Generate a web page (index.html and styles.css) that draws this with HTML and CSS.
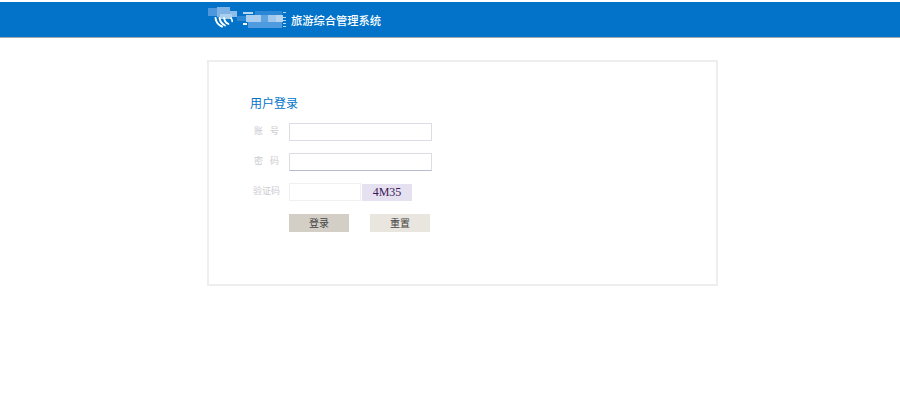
FILE: index.html
```html
<!DOCTYPE html>
<html lang="zh">
<head>
<meta charset="utf-8">
<title>旅游综合管理系统</title>
<link rel="stylesheet" href="styles.css">
</head>
<body>
<header class="topbar">
  <div class="brand">
    <svg class="logo" width="82" height="35" viewBox="208 2 82 35" aria-hidden="true">
      <g shape-rendering="crispEdges">
        <rect x="208" y="8" width="9" height="8" fill="#4d97dc"/>
        <rect x="217" y="7" width="13" height="10" fill="#7eb2e5"/>
        <rect x="230" y="11" width="7" height="6" fill="#90bde8"/>
        <rect x="220" y="14" width="12" height="5" fill="#a8cfee"/>
        <rect x="237" y="16" width="10" height="5" fill="#2f88d4"/>
        <rect x="255" y="11" width="27" height="4" fill="#2a87d6"/>
        <rect x="246" y="15" width="15" height="7" fill="#a9cdee"/>
        <rect x="261" y="15" width="7" height="7" fill="#5da3e0"/>
        <rect x="268" y="15" width="8" height="7" fill="#a0c8ec"/>
        <rect x="276" y="15" width="7" height="7" fill="#b4d4f0"/>
        <rect x="248" y="22" width="34" height="6" fill="#4f9bdf"/>
        <rect x="243" y="12" width="10" height="2" fill="#b9d6f1"/>
        <rect x="243" y="23" width="4" height="2" fill="#f2f7fc"/>
        <rect x="283" y="12" width="3" height="1" fill="#b9d6f1"/>
        <rect x="283" y="17" width="3" height="1" fill="#b9d6f1"/>
        <rect x="283" y="20" width="3" height="1" fill="#b9d6f1"/>
        <rect x="283" y="23" width="3" height="1" fill="#b9d6f1"/>
        <rect x="283" y="26" width="3" height="1" fill="#b9d6f1"/>
      </g>
      <g fill="none" stroke="#fff" stroke-linecap="round">
        <path d="M215.500 18c.5 4 3 7 6.500 8.500" stroke-width="2"/>
        <path d="M219.500 18c.5 3 2.500 6 5.500 7.500" stroke-width="1.800"/>
        <path d="M224 18c.5 2.500 2 5 4.500 6" stroke-width="1.800"/>
        <path d="M231 18c.8 1 1.200 2 1.200 3.500" stroke-width="1.600"/>
      </g>
    </svg>
    <span class="sysname">旅游综合管理系统</span>
  </div>
</header>
<main class="card">
  <h1 class="title">用户登录</h1>
  <form class="form">
    <div class="row">
      <label class="lbl lbl-wide">账 号</label>
      <input class="field" type="text">
    </div>
    <div class="row">
      <label class="lbl lbl-wide">密 码</label>
      <input class="field field-pw" type="password">
    </div>
    <div class="row">
      <label class="lbl">验证码</label>
      <input class="field field-code" type="text">
      <span class="captcha">4M35</span>
    </div>
    <div class="actions">
      <button class="btn btn-login" type="button">登录</button>
      <button class="btn btn-reset" type="button">重置</button>
    </div>
  </form>
</main>
</body>
</html>
```
FILE: styles.css
```css
* { box-sizing: border-box; }
html, body { margin: 0; height: 418px; overflow: hidden; background: #fff; }
body { padding-top: 2px; font-family: "Noto Sans CJK SC", "Liberation Sans", sans-serif; font-size: 10px; }
.topbar { height: 36px; background: #0273c9; border-bottom: 1px solid #a5a9ac; }
.brand { margin-left: 208px; display: flex; align-items: center; height: 35px; }
.logo { flex: none; }
.sysname { margin-left: 1px; color: #fff; font-size: 11.25px; line-height: 14px; font-weight: 500; }
.card { width: 511px; height: 226px; margin: 22px 0 0 207px; border: 2px solid #eeeeee; padding: 32px 0 0 41px; }
.title { margin: 0; font-size: 12px; font-weight: 400; line-height: 18px; color: #0273c9; }
.form { margin-top: 11px; display: flex; flex-direction: column; }
.row { display: flex; align-items: center; height: 18px; margin-bottom: 12px; }
.lbl { width: 39px; text-align: center; padding: 0 7px 3px 1px; color: #cbcbd0; font-size: 9px; white-space: pre; }
.lbl-wide { word-spacing: 5px; }
.field { width: 143px; height: 18px; padding: 0; border: 1px solid #dcdde3; background: #fff; outline: none; }
.field-pw { border-bottom-color: #b5bccb; }
.field-code { width: 72px; border-color: #f0f0f0; }
.captcha { width: 50px; height: 17px; margin-left: 1px; background: #e6e1f1; color: #3c1a58; font-family: "Liberation Serif", serif; font-size: 12px; line-height: 17px; text-align: center; }
.actions { display: flex; gap: 21px; margin: 1px 0 0 39px; }
.btn { width: 60px; height: 18px; padding: 0; border: 0; color: #444; font-family: inherit; font-size: 10px; line-height: 18px; }
.btn-login { background: #d3cfc6; }
.btn-reset { background: #e9e6df; }
```
